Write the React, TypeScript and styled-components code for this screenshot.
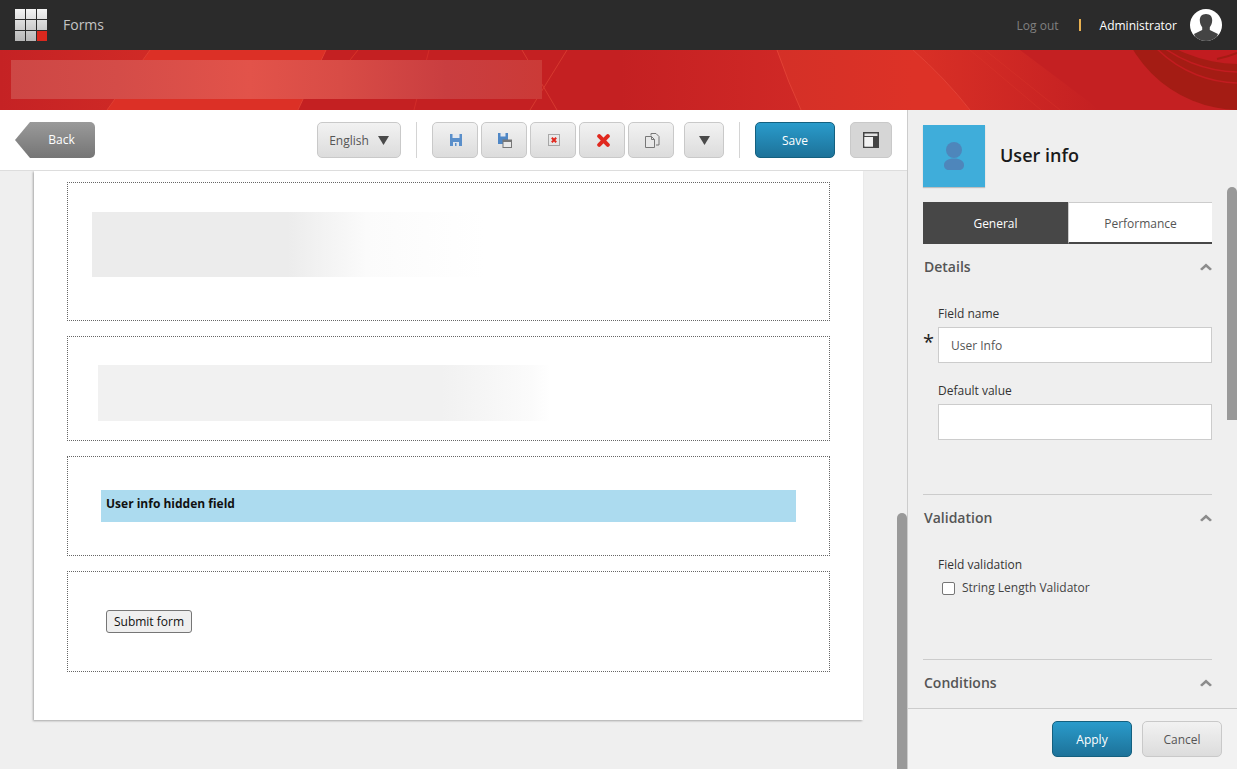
import React from "react";
import styled, { createGlobalStyle } from "styled-components";

const Global = createGlobalStyle`
  html, body { margin: 0; padding: 0; height: 100%; overflow: hidden; }
  body { font-family: "Open Sans", "Liberation Sans", sans-serif; font-size: 12px; color: #333; background: #efefef; }
  #root { height: 100%; }
  * { box-sizing: border-box; }
`;

const Shell = styled.div`
  width: 1237px;
  height: 769px;
  display: flex;
  flex-direction: column;
  overflow: hidden;
`;

const TopBar = styled.header`
  height: 50px;
  flex: none;
  background: #2b2b2b;
  display: flex;
  align-items: center;
  padding: 0 15px;
`;

const AppName = styled.span`
  margin: -1px 0 0 15px;
  font-size: 14px;
  color: #c4c4c4;
`;

const TopRight = styled.div`
  margin-left: auto;
  display: flex;
  align-items: center;
`;

const LogOut = styled.span`
  font-size: 12px;
  color: #808080;
`;

const Pipe = styled.span`
  width: 2px;
  height: 12px;
  margin: 0 19px 0 20px;
  background: #e8b050;
`;

const UserName = styled.span`
  font-size: 12px;
  color: #fff;
  margin-right: 13px;
`;

const Banner = styled.div`
  height: 60px;
  flex: none;
  position: relative;
  overflow: hidden;
  background: #c42022;
  padding: 10px 0 6px 11px;
`;

const BannerArt = styled.svg`
  position: absolute;
  inset: 0;
`;

const BlurredTitle = styled.div`
  position: relative;
  width: 531px;
  height: 39px;
  background: linear-gradient(90deg, #cd4745, #d44c48 20%, #e2534a 45%, #d84c46 62%, #c93e40 82%, #cb3a37);
`;

const Body = styled.div`
  flex: 1;
  min-height: 0;
  display: flex;
`;

const Main = styled.main`
  width: 907px;
  flex: none;
  display: flex;
  flex-direction: column;
  position: relative;
`;

const Toolbar = styled.div`
  height: 61px;
  flex: none;
  background: #fff;
  border-bottom: 1px solid #ddd;
  display: flex;
  align-items: flex-start;
  padding: 12px 15px 0;
`;

const BackButton = styled.button`
  position: relative;
  width: 80px;
  height: 36px;
  padding: 0 0 1px 13px;
  border: 0;
  font: inherit;
  color: #fff;
  background: linear-gradient(#9a9a9a, #757575);
  clip-path: polygon(15px 0, 100% 0, 100% 100%, 15px 100%, 0 50%);
  border-radius: 0 5px 5px 0;
`;

const GreyButton = styled.button<{ $w: number }>`
  width: ${p => p.$w}px;
  height: 36px;
  flex: none;
  padding: 0;
  display: flex;
  align-items: center;
  justify-content: center;
  gap: 9px;
  font: inherit;
  color: #555;
  background: linear-gradient(#f2f2f2, #dcdcdc);
  border: 1px solid #c9c9c9;
  border-radius: 5px;
`;

const LangButton = styled(GreyButton)`
  margin-left: 222px;
`;

const IconButton = styled(GreyButton)`
  padding-left: 2px;
`;

const Divider = styled.span`
  width: 1px;
  height: 36px;
  flex: none;
  background: #d4d4d4;
  margin: 0 15px;
`;

const IconGroup = styled.div`
  display: flex;
  gap: 3px;
  margin-right: 10px;
`;

const BlueButton = styled.button<{ $w: number }>`
  width: ${p => p.$w}px;
  height: 36px;
  flex: none;
  padding: 0;
  font: inherit;
  color: #fff;
  background: linear-gradient(#2a9bcb, #1d7299);
  border: 1px solid #14607f;
  border-radius: 5px;
`;

const ToggleButton = styled(GreyButton)`
  margin-left: 15px;
  background: #d6d6d6;
`;

const Canvas = styled.div`
  flex: 1;
  min-height: 0;
  overflow: hidden;
  background: #efefef;
  padding-left: 34px;
`;

const Sheet = styled.div`
  width: 829px;
  height: 549px;
  background: #fff;
  box-shadow: -1px 1px 2px rgba(0, 0, 0, 0.3);
  padding: 11px 33px 0 33px;
  display: flex;
  flex-direction: column;
  gap: 15px;
`;

const Zone = styled.section<{ $h: number; $pt: number; $pl: number }>`
  height: ${p => p.$h}px;
  flex: none;
  border: 1px dotted #666;
  padding: ${p => p.$pt}px 33px 0 ${p => p.$pl}px;
`;

const Blurred = styled.div<{ $w: number; $h: number; $c: string; $fade: number }>`
  width: ${p => p.$w}px;
  height: ${p => p.$h}px;
  background: linear-gradient(90deg, ${p => p.$c}, ${p => p.$c} ${p => p.$fade}%, #fbfbfb ${p => p.$fade + 20}%, #fff);
`;

const Hidden = styled.div`
  height: 32px;
  padding: 5px 5px 0;
  background: #acdbef;
  color: #111;
  font-weight: 700;
  font-size: 12px;
  line-height: 18px;
`;

const Submit = styled.button`
  width: 86px;
  height: 23px;
  padding: 0 0 1px;
  font: inherit;
  font-size: 12px;
  color: #111;
  background: #efefef;
  border: 1px solid #767676;
  border-radius: 3px;
`;

const Scroll = styled.div<{ $top: number; $right: number; $h: number }>`
  position: absolute;
  top: ${p => p.$top}px;
  right: ${p => p.$right}px;
  width: 10px;
  height: ${p => p.$h}px;
  background: #999;
  border-radius: 5px 5px 0 0;
`;

const Side = styled.aside`
  flex: 1;
  position: relative;
  display: flex;
  flex-direction: column;
  background: #efefef;
  border-left: 1px solid #ccc;
`;

const SideScroll = styled.div`
  flex: 1;
  min-height: 0;
  overflow: hidden;
  padding: 15px 25px 0 15px;
`;

const Head = styled.div`
  display: flex;
  align-items: center;
  gap: 15px;
`;

const Tile = styled.div`
  width: 62px;
  height: 62px;
  display: flex;
  align-items: center;
  justify-content: center;
  background: #3fadda;
  box-shadow: 0 1px 1px rgba(0, 0, 0, 0.2);
`;

const Title = styled.h1`
  margin: 0 0 2px;
  font-size: 18px;
  font-weight: 600;
  color: #1a1a1a;
`;

const Tabs = styled.div`
  display: flex;
  height: 42px;
  margin-top: 15px;
`;

const Tab = styled.div<{ $on?: boolean }>`
  flex: ${p => (p.$on ? "0 0 145px" : "1")};
  display: flex;
  align-items: center;
  justify-content: center;
  font-size: 12px;
  padding-top: 2px;
  color: ${p => (p.$on ? "#fff" : "#555")};
  background: ${p => (p.$on ? "#474747" : "#fff")};
  border-top: ${p => (p.$on ? "0" : "1px solid #ccc")};
  border-left: ${p => (p.$on ? "0" : "1px solid #ccc")};
  border-bottom: 2px solid #474747;
`;

const Group = styled.section<{ $h: number; $line?: boolean }>`
  height: ${p => p.$h}px;
  border-top: ${p => (p.$line ? "1px solid #ccc" : "0")};
`;

const GroupHead = styled.div`
  height: 45px;
  display: flex;
  align-items: center;
  justify-content: space-between;
  padding: 0 0 0 1px;
  font-size: 14px;
  font-weight: 600;
  color: #555;
`;

const FieldArea = styled.div`
  padding: 16px 0 0 15px;
`;

const Label = styled.div`
  font-size: 12px;
  line-height: 18px;
  color: #333;
  margin-bottom: 4px;
`;

const InputWrap = styled.div`
  position: relative;
  margin-bottom: 19px;
`;

const Star = styled.span`
  position: absolute;
  left: -15px;
  top: 3px;
  font-size: 20px;
  line-height: 24px;
  color: #222;
`;

const Input = styled.input`
  display: block;
  width: 100%;
  height: 36px;
  padding: 0 12px;
  font: inherit;
  font-size: 12px;
  color: #555;
  background: #fff;
  border: 1px solid #ccc;
`;

const CheckRow = styled.label`
  display: flex;
  align-items: center;
  gap: 7px;
  margin-top: 5px;
  padding-left: 4px;
  font-size: 12px;
  color: #444;
  line-height: 18px;
`;

const Box = styled.span`
  width: 13px;
  height: 13px;
  background: #fff;
  border: 1px solid #767676;
  border-radius: 2px;
`;

const ValidationLabel = styled(Label)`
  margin-bottom: 0;
`;

const Footer = styled.div`
  height: 61px;
  flex: none;
  border-top: 1px solid #ccc;
  background: #f2f2f2;
  display: flex;
  justify-content: flex-end;
  align-items: flex-start;
  gap: 10px;
  padding: 12px 15px 0 0;
`;

const Chevron = () => (
  <svg width="12" height="8" viewBox="0 0 12 8">
    <path d="M0 6l6-5.500L12 6l-2 1.500-4-3.500-4 3.500z" fill="#8c8c8c" />
  </svg>
);

const Caret = () => (
  <svg width="11" height="9" viewBox="0 0 11 9">
    <path d="M0 0h11L5.500 9z" fill="#4a4a4a" />
  </svg>
);

const Logo = () => (
  <svg width="33" height="33" viewBox="0 0 33 33">
    <defs>
      <linearGradient id="lg" gradientUnits="userSpaceOnUse" x1="0" y1="0" x2="0" y2="33">
        <stop offset="0" stopColor="#f4f4f4" />
        <stop offset="1" stopColor="#b4b4b4" />
      </linearGradient>
    </defs>
    {[0, 11, 22].map(y =>
      [0, 11, 22].map(x => (
        <rect key={`${x}-${y}`} x={x} y={y} width="10" height="10" fill={x === 22 && y === 22 ? "#d9281e" : "url(#lg)"} />
      ))
    )}
  </svg>
);

const Avatar = () => (
  <svg width="32" height="32" viewBox="0 0 32 32">
    <defs>
      <clipPath id="av"><circle cx="16" cy="16" r="16" /></clipPath>
    </defs>
    <circle cx="16" cy="16" r="16" fill="#fff" />
    <g clipPath="url(#av)" fill="#444">
      <path d="M16 5c-4.200 0-6.400 2.800-6.200 6.500.1 2.800 1 5 2.400 6.700v2.800L4 25l3 7h18l3-7-8.200-4v-2.800c1.400-1.700 2.300-3.900 2.400-6.700C22.400 7.800 20.200 5 16 5z" />
    </g>
  </svg>
);

const SaveIcon = () => (
  <svg width="12" height="12" viewBox="0 0 12 12">
    <rect width="12" height="12" fill="#5a8fca" />
    <rect x="2.500" y="0" width="7" height="4" fill="#e4e8ee" />
    <rect x="3" y="8" width="6" height="4" fill="#dfe5ec" />
    <rect x="5" y="9" width="1.500" height="3" fill="#5a8fca" />
  </svg>
);

const SaveAsIcon = () => (
  <svg width="14" height="15" viewBox="0 0 14 15">
    <rect width="10" height="11" fill="#4f87c6" />
    <rect x="2.500" y="0" width="5" height="3.500" fill="#e4e8ee" />
    <rect x="5" y="7" width="8.500" height="7.500" fill="#e8e8e8" stroke="#777" />
    <rect x="5" y="7" width="8.500" height="2" fill="#777" />
  </svg>
);

const DeleteSmall = () => (
  <svg width="12" height="12" viewBox="0 0 12 12">
    <rect x=".5" y=".5" width="11" height="11" fill="none" stroke="#666" strokeDasharray="1 1" />
    <path d="M3.800 3.800l4.400 4.400m0-4.400l-4.400 4.400" stroke="#e0281e" strokeWidth="2" />
  </svg>
);

const DeleteBig = () => (
  <svg width="13" height="13" viewBox="0 0 13 13">
    <path d="M2.200 2.200l8.600 8.600m0-8.600l-8.600 8.600" stroke="#e0281e" strokeWidth="4" strokeLinecap="round" />
  </svg>
);

const CopyIcon = () => (
  <svg width="15" height="15" viewBox="0 0 15 15" fill="none" stroke="#777">
    <path d="M6 2.500V.5h5l3 3v8.500h-3" />
    <path d="M.5 3.500h6l3 3v8h-9z" fill="#e8e8e8" />
    <path d="M6.500 3.500v3h3" />
  </svg>
);

const LayoutIcon = () => (
  <svg width="16" height="16" viewBox="0 0 16 16">
    <rect x=".75" y=".75" width="14.500" height="14.500" fill="#e4e4e4" stroke="#444" strokeWidth="1.500" />
    <rect x="1" y="4" width="14" height="1" fill="#444" />
    <rect x="10" y="4" width="5.500" height="11.500" fill="#444" />
    <rect x="1.500" y="5" width="8.500" height="9.500" fill="#f2f2f2" />
  </svg>
);

const PersonIcon = () => (
  <svg width="20" height="28" viewBox="0 0 20 28">
    <circle cx="10" cy="8" r="8" fill="#4e86bb" />
    <path d="M10 16.500c6 0 10 2.500 10 6.500 0 3.500-2 5-5 5H5c-3 0-5-1.500-5-5 0-4 4-6.500 10-6.500z" fill="#4e86bb" />
  </svg>
);

const BannerDrawing = () => (
  <BannerArt width="1237" height="60" viewBox="0 0 1237 60">
    <defs>
      <linearGradient id="fl" x1="0" x2="1">
        <stop offset="0" stopColor="#c52224" />
        <stop offset="1" stopColor="#d02a26" />
      </linearGradient>
      <linearGradient id="fb" x1="0" x2="1">
        <stop offset="0" stopColor="#d43027" />
        <stop offset=".7" stopColor="#dd3227" />
        <stop offset="1" stopColor="#dd3227" />
      </linearGradient>
      <linearGradient id="fc" x1="0" x2="1">
        <stop offset="0" stopColor="#d93026" />
        <stop offset="1" stopColor="#c42022" />
      </linearGradient>
      <linearGradient id="fd" x1="0" x2="1">
        <stop offset="0" stopColor="#c42022" />
        <stop offset="1" stopColor="#d02926" />
      </linearGradient>
    </defs>
    <path d="M0 0H150L107 60H0z" fill="url(#fl)" />
    <path d="M150 0H326L298 60H107z" fill="#dc3026" />
    <path d="M150 0L107 60" stroke="#e5493a" strokeWidth="1" opacity=".7" />
    <path d="M326 0L298 60" stroke="#e5493a" strokeWidth="1" opacity=".7" />
    <path d="M358 0L342 20" stroke="#d83428" strokeWidth="1" />
    <path d="M429 0L414 60" stroke="#d22c28" strokeWidth="1" />
    <path d="M522 0L557 60M567 0L530 60" stroke="#d63a30" strokeWidth="1" />
    <path d="M620 0H777Q788 32 801 60H620z" fill="url(#fd)" />
    <path d="M777 0Q788 32 801 60H970Q945 28 913 0z" fill="url(#fb)" />
    <path d="M913 0Q945 28 970 60H1100L1020 0z" fill="url(#fc)" />
    <path d="M777 0Q788 32 801 60M913 0Q945 28 970 60" stroke="#e6473a" strokeWidth="1" fill="none" opacity=".8" />
    <path d="M970 0L1041 60M985 0L1060 60" stroke="#dd3a2d" strokeWidth="1" opacity=".35" />
    <circle cx="1240" cy="-65" r="125" fill="#a41c14" />
    <circle cx="1240" cy="-85" r="118" fill="none" stroke="#c21c20" strokeWidth="1.500" />
    <circle cx="1240" cy="-110" r="132" fill="none" stroke="#c21c20" strokeWidth="1.500" />
    <circle cx="1240" cy="-130" r="144" fill="#c21c20" />
    <path d="M1217 9Q1228 7 1237 3" stroke="#a41c14" strokeWidth="2" fill="none" />
  </BannerArt>
);

export default function App() {
  return (
    <Shell>
      <Global />
      <TopBar>
        <Logo />
        <AppName>Forms</AppName>
        <TopRight>
          <LogOut>Log out</LogOut>
          <Pipe />
          <UserName>Administrator</UserName>
          <Avatar />
        </TopRight>
      </TopBar>
      <Banner>
        <BannerDrawing />
        <BlurredTitle />
      </Banner>
      <Body>
        <Main>
          <Toolbar>
            <BackButton>Back</BackButton>
            <LangButton $w={84}>English <Caret /></LangButton>
            <Divider />
            <IconGroup>
              <IconButton $w={46}><SaveIcon /></IconButton>
              <IconButton $w={46}><SaveAsIcon /></IconButton>
              <IconButton $w={46}><DeleteSmall /></IconButton>
              <IconButton $w={46}><DeleteBig /></IconButton>
              <IconButton $w={46}><CopyIcon /></IconButton>
            </IconGroup>
            <GreyButton $w={40}><Caret /></GreyButton>
            <Divider />
            <BlueButton $w={80}>Save</BlueButton>
            <ToggleButton $w={42}><LayoutIcon /></ToggleButton>
          </Toolbar>
          <Canvas>
            <Sheet>
              <Zone $h={139} $pt={29} $pl={24}>
                <Blurred $w={392} $h={65} $c="#ececec" $fade={50} />
              </Zone>
              <Zone $h={105} $pt={28} $pl={30}>
                <Blurred $w={452} $h={56} $c="#f1f1f1" $fade={76} />
              </Zone>
              <Zone $h={100} $pt={33} $pl={33}>
                <Hidden>User info hidden field</Hidden>
              </Zone>
              <Zone $h={101} $pt={38} $pl={38}>
                <Submit>Submit form</Submit>
              </Zone>
            </Sheet>
          </Canvas>
          <Scroll $top={403} $right={0} $h={256} />
        </Main>
        <Side>
          <SideScroll>
            <Head>
              <Tile><PersonIcon /></Tile>
              <Title>User info</Title>
            </Head>
            <Tabs>
              <Tab $on>General</Tab>
              <Tab>Performance</Tab>
            </Tabs>
            <Group $h={250}>
              <GroupHead>Details <Chevron /></GroupHead>
              <FieldArea>
                <Label>Field name</Label>
                <InputWrap>
                  <Star>*</Star>
                  <Input readOnly value="User Info" />
                </InputWrap>
                <Label>Default value</Label>
                <InputWrap><Input readOnly value="" /></InputWrap>
              </FieldArea>
            </Group>
            <Group $h={165} $line>
              <GroupHead>Validation <Chevron /></GroupHead>
              <FieldArea>
                <ValidationLabel>Field validation</ValidationLabel>
                <CheckRow><Box />String Length Validator</CheckRow>
              </FieldArea>
            </Group>
            <Group $h={50} $line>
              <GroupHead>Conditions <Chevron /></GroupHead>
            </Group>
          </SideScroll>
          <Footer>
            <BlueButton $w={80}>Apply</BlueButton>
            <GreyButton $w={80}>Cancel</GreyButton>
          </Footer>
          <Scroll $top={77} $right={0} $h={233} />
        </Side>
      </Body>
    </Shell>
  );
}
